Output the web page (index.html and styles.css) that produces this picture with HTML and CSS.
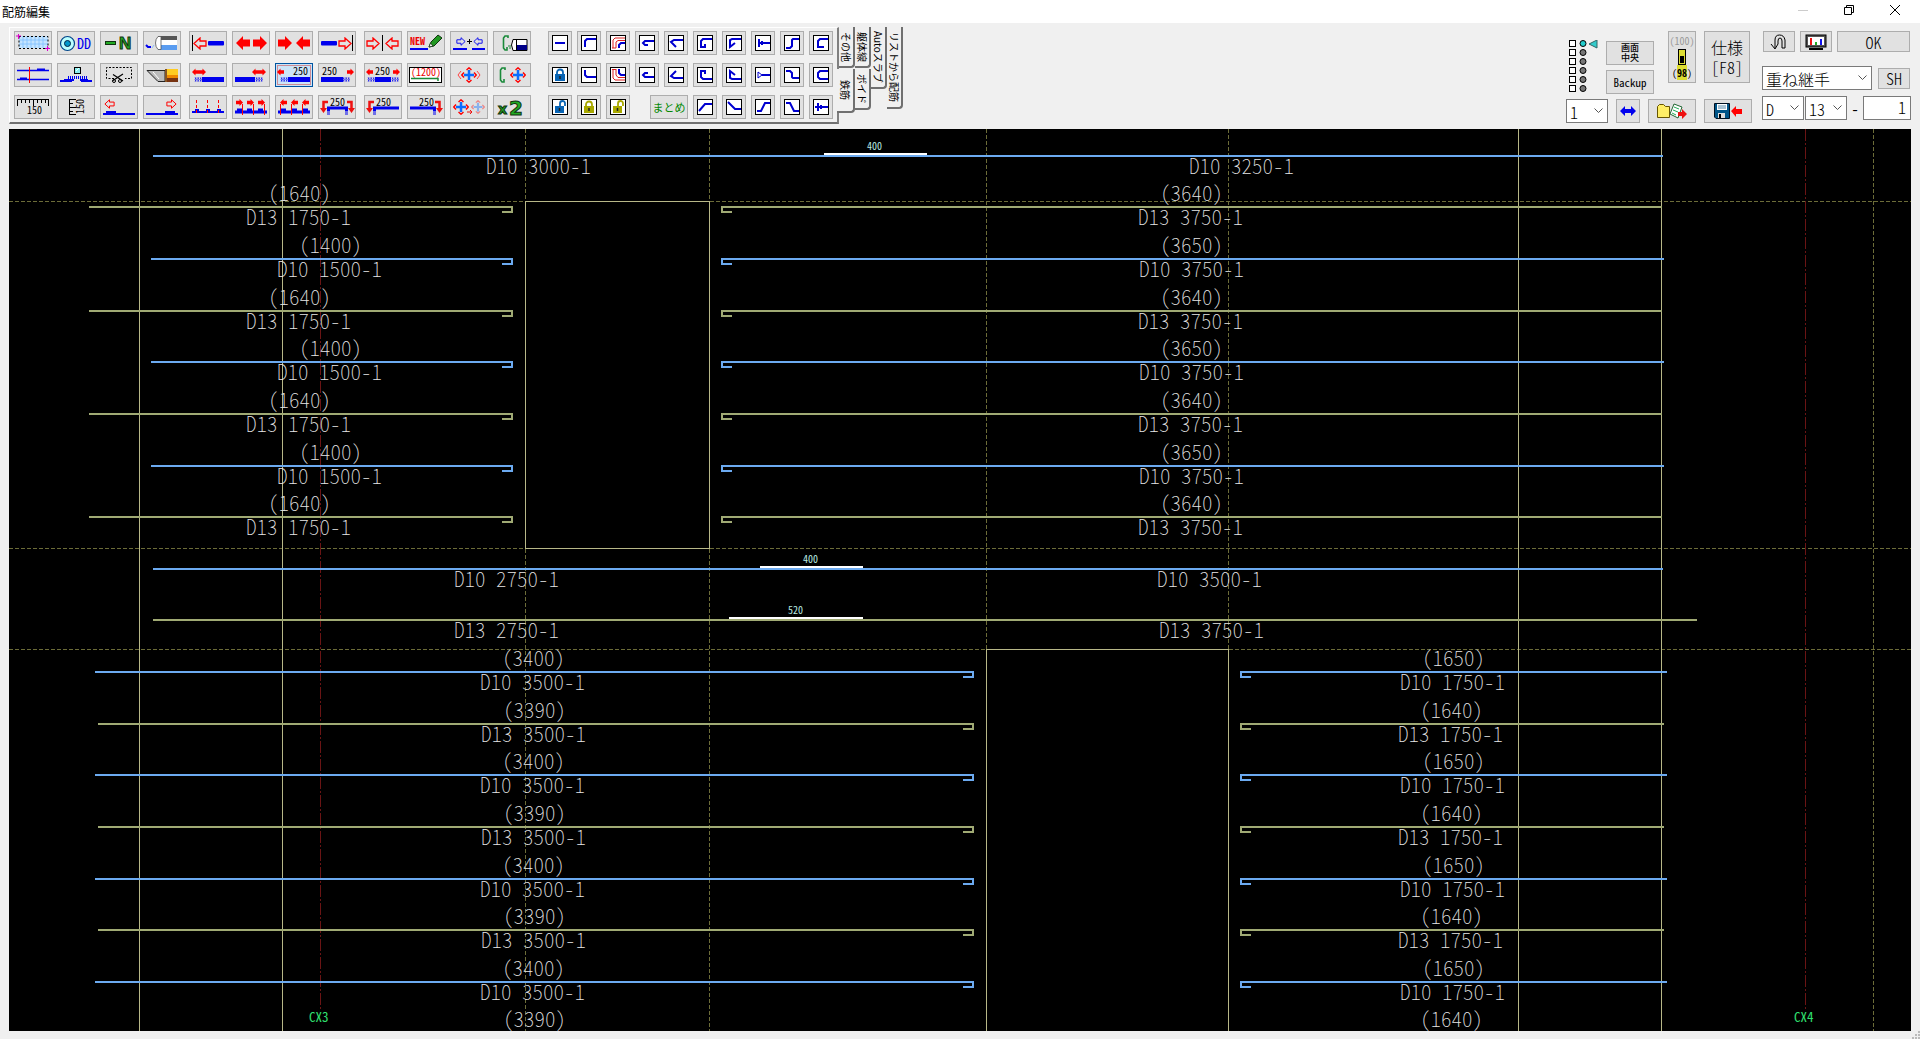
FILE: index.html
```html
<!DOCTYPE html>
<html lang="ja">
<head>
<meta charset="utf-8">
<title>配筋編集</title>
<link rel="stylesheet" href="styles.css">
</head>
<body>
<svg class="defs" aria-hidden="true">
  <symbol id="hl" viewBox="0 0 14 13"><path d="M1 6.500L7 1V4H13V9H7V12Z" fill="none" stroke="currentColor" stroke-width="1.300"/></symbol>
  <symbol id="hr" viewBox="0 0 14 13"><path d="M13 6.500L7 1V4H1V9H7V12Z" fill="none" stroke="currentColor" stroke-width="1.300"/></symbol>
  <symbol id="sl" viewBox="0 0 14 14"><path d="M0 7L7 0V3.500H14V10.500H7V14Z" fill="#f00"/></symbol>
  <symbol id="sr" viewBox="0 0 14 14"><path d="M14 7L7 0V3.500H0V10.500H7V14Z" fill="#f00"/></symbol>
  <symbol id="coil" viewBox="0 0 10 6"><path d="M2 .5Q0 3 2 5.500M5 .5Q3 3 5 5.500M8 .5Q6 3 8 5.500M1 .5Q4 3 1 5.500M4 .5Q7 3 4 5.500M7 .5Q10 3 7 5.500" fill="none" stroke="#00e" stroke-width=".8"/></symbol>
  <symbol id="cross" viewBox="0 0 16 16"><path d="M8 3V13M3 8H13" stroke="#0a6cff" stroke-width="2.500"/><path d="M5.500 3L8 .8 10.500 3M5.500 13L8 15.200 10.500 13M3 5.500L.8 8 3 10.500M13 5.500L15.200 8 13 10.500" fill="none" stroke="#f00" stroke-width="1.400"/></symbol>
  <symbol id="gc" viewBox="0 0 7 16"><path d="M6 3V1H3L1.500 3V13L3 15H5V12" fill="none" stroke="#1a8a3a" stroke-width="1.600"/></symbol>
  <symbol id="lock" viewBox="0 0 16 16"><path d="M5 8V5.500a3 3 0 0 1 6 0V8" fill="none" stroke="currentColor" stroke-width="1.800"/><rect x="3" y="7" width="10" height="7" fill="currentColor"/><path d="M8 9v3" stroke="#222" stroke-width="1.500"/></symbol>
  <symbol id="unlock" viewBox="0 0 16 16"><path d="M8 8V4.500a2.500 2.500 0 0 1 5 0V7" fill="none" stroke="currentColor" stroke-width="1.800"/><rect x="3" y="7" width="9" height="7" fill="currentColor"/><path d="M7.500 9v3" stroke="#222" stroke-width="1.500"/></symbol>
</svg>

<header class="titlebar">
  <h1 class="title">配筋編集</h1>
  <div class="window-buttons">
    <button class="win" aria-label="最小化"><svg width="12" height="12"><path d="M1 6.500H11" stroke="#ccc"/></svg></button>
    <button class="win" aria-label="元に戻す"><svg width="12" height="12"><path d="M1.500 3.500H8.500V10.500H1.500ZM3.500 3.500V1.500H10.500V8.500H8.500" fill="none" stroke="#000"/></svg></button>
    <button class="win" aria-label="閉じる"><svg width="12" height="12"><path d="M1 1L11 11M11 1L1 11" stroke="#000"/></svg></button>
  </div>
</header>

<div class="toolbar">
  <section class="panel" aria-label="鉄筋">
    <div class="tools">
      <div class="group">
        <button class="tool" aria-label="範囲選択"><svg viewBox="1 1 36 22"><rect x="5" y="5" width="29" height="12" fill="#c4e4ff"/><path d="M9 5V17M13 5V17M17 5V17M21 5V17M25 5V17M29 5V17M5 9H34M5 13H34" stroke="#7fbfff" stroke-width=".8"/><rect x="5" y="5.500" width="29" height="12" fill="none" stroke="#000" stroke-dasharray="2 2"/><path d="M2 5H7M4.500 3V8M31 17.500H36M33.500 15V20" stroke="#d0c"/></svg></button>
        <button class="tool" aria-label="DD"><svg viewBox="1 1 36 22"><circle cx="10.500" cy="12.500" r="7" fill="#bff" stroke="#048" stroke-width="1.200"/><circle cx="10.500" cy="12.500" r="3" fill="#09c" stroke="#024"/><text x="20" y="18" class="ic blue t14">DD</text></svg></button>
        <button class="tool" aria-label="N"><svg viewBox="1 1 36 22"><rect x="5.500" y="10.500" width="10" height="3" fill="#2a2" stroke="#131"/><text x="19" y="18" class="ic bold green t17">N</text></svg></button>
        <button class="tool" aria-label="消去"><svg viewBox="1 1 36 22"><path d="M3 14L5 16 8 16" fill="none" stroke="#00e" stroke-width="2"/><path d="M9 17l2-3" stroke="#8bf"/><rect x="15" y="5" width="19" height="5" fill="#555"/><rect x="15" y="9" width="19" height="5" fill="#fff"/><rect x="15" y="14" width="19" height="5" fill="#5a9cf0"/><path d="M18 5.500H15Q12.500 8 12.500 12T15 18.500H18Z" fill="#fff" stroke="#555" stroke-width=".8"/></svg></button>
      </div>
      <div class="group">
        <button class="tool" aria-label="左端へ"><svg viewBox="1 1 36 22" class="red"><path d="M3.500 4V20" stroke="#000"/><use href="#hl" x="4" y="6" width="14" height="13"/><rect x="19" y="10" width="16" height="4.500" rx="1" fill="#00e"/></svg></button>
        <button class="tool" aria-label="両側へ伸ばす"><svg viewBox="1 1 36 22"><use href="#sl" x="4" y="5" width="14" height="14"/><use href="#sr" x="21" y="5" width="14" height="14"/></svg></button>
        <button class="tool" aria-label="両側から縮める"><svg viewBox="1 1 36 22"><use href="#sr" x="3" y="5" width="14" height="14"/><use href="#sl" x="21" y="5" width="14" height="14"/></svg></button>
        <button class="tool" aria-label="右端へ"><svg viewBox="1 1 36 22" class="red"><rect x="3" y="10" width="16" height="4.500" rx="1" fill="#00e"/><use href="#hr" x="20" y="6" width="14" height="13"/><path d="M34.500 4V20" stroke="#000"/></svg></button>
      </div>
      <div class="group">
        <button class="tool" aria-label="中央へ"><svg viewBox="1 1 36 22" class="red"><use href="#hr" x="2" y="6" width="14" height="13"/><path d="M18.500 4V20" stroke="#000"/><use href="#hl" x="21" y="6" width="14" height="13"/></svg></button>
        <button class="tool" aria-label="新規"><svg viewBox="1 1 36 22"><text x="3" y="14" class="ic bold redt t9">NEW</text><rect x="3" y="17" width="18" height="2" fill="#00e"/><path d="M22 16L24 11 31 4 35 7 27 15Z" fill="#292" stroke="#131"/><path d="M22 16L23.500 12 26 15Z" fill="#fff" stroke="#131" stroke-width=".8"/></svg></button>
        <button class="tool" aria-label="結合"><svg viewBox="1 1 36 22" class="blue"><use href="#hr" x="6" y="6" width="10" height="9"/><use href="#hl" x="23" y="6" width="10" height="9"/><path d="M17 10.500H22M19.500 8V13" stroke="#000"/><path d="M3 18H17M22 18H35" stroke="#00e" stroke-width="2"/></svg></button>
        <button class="tool" aria-label="フック消去"><svg viewBox="1 1 36 22"><use href="#gc" x="9" y="4" width="7" height="16"/><path d="M15 15H18M16 17H18" stroke="#1a8a3a"/><path d="M20 8.500H34V19.500H20Q17 14 20 8.500Z" fill="#fff" stroke="#000"/><rect x="24" y="14" width="10" height="5" fill="#008"/><path d="M23.500 9V19" fill="none" stroke="#000"/></svg></button>
      </div>
      <div class="group">
        <button class="tool" aria-label="切断線"><svg viewBox="1 1 36 22"><path d="M3 7.500H35M3 16.500H35" stroke="#00e" stroke-width="1.500"/><path d="M23 6.500H31M6 15.500H13" stroke="#00e" stroke-width="2"/><path d="M15.500 4V20" stroke="#f00"/></svg></button>
        <button class="tool" aria-label="部分切断"><svg viewBox="1 1 36 22"><rect x="17.500" y="4.500" width="6" height="6" fill="#8ee" stroke="#000"/><path d="M19 8L22 5" stroke="#fff"/><path d="M11 14.500H30" stroke="#00e" stroke-width="3" stroke-dasharray="1 1"/><path d="M3 18H15M24 18H35M7 17H17M23 17H31" stroke="#00e" stroke-width="2"/></svg></button>
        <button class="tool" aria-label="切り取り"><svg viewBox="1 1 36 22"><path d="M14 15.500H6.500V4.500H31.500V15.500H25" fill="none" stroke="#000" stroke-dasharray="2 1.500"/><path d="M13 11.500L23 18M13 17.500L23 11" stroke="#000" stroke-width="1.200"/><circle cx="14" cy="18" r="1.500" fill="none" stroke="#000"/><circle cx="20" cy="18" r="1.500" fill="none" stroke="#000"/></svg></button>
        <button class="tool" aria-label="カッター"><svg viewBox="1 1 36 22"><path d="M4 7.500H22V18.500H15Z" fill="#bbb" stroke="#222"/><path d="M10 9L16 16" stroke="#fff"/><rect x="22" y="6" width="13" height="6" fill="#fc2"/><rect x="22" y="12" width="13" height="3" fill="#e80"/><rect x="22" y="15" width="13" height="4" fill="#731"/><rect x="22" y="6" width="2" height="13" fill="#852"/></svg></button>
      </div>
      <div class="group">
        <button class="tool" aria-label="左端調整"><svg viewBox="1 1 36 22"><use href="#sl" x="3" y="5" width="7" height="8"/><use href="#sr" x="10" y="5" width="7" height="8"/><use href="#coil" x="5" y="14" width="9" height="5"/><rect x="13" y="14" width="22" height="5" fill="#00e"/></svg></button>
        <button class="tool" aria-label="右端調整"><svg viewBox="1 1 36 22"><use href="#sl" x="20" y="5" width="7" height="8"/><use href="#sr" x="27" y="5" width="7" height="8"/><use href="#coil" x="23" y="14" width="9" height="5"/><rect x="3" y="14" width="20" height="5" fill="#00e"/></svg></button>
        <button class="tool pressed" aria-label="左へ250"><svg viewBox="1 1 36 22"><rect x="2.500" y="2.500" width="33" height="19" fill="none" stroke="#c33" stroke-dasharray="1 1"/><use href="#sl" x="2" y="5" width="7" height="8"/><text x="18" y="12" class="ic t9">250</text><use href="#coil" x="5" y="14" width="9" height="5"/><rect x="13" y="14" width="22" height="5" fill="#00e"/></svg></button>
        <button class="tool" aria-label="右へ250"><svg viewBox="1 1 36 22"><use href="#sr" x="29" y="5" width="7" height="8"/><text x="4" y="12" class="ic t9">250</text><rect x="3" y="14" width="22" height="5" fill="#00e"/><use href="#coil" x="24" y="14" width="9" height="5"/></svg></button>
      </div>
      <div class="group">
        <button class="tool" aria-label="両側250"><svg viewBox="1 1 36 22"><use href="#sl" x="2" y="5" width="7" height="8"/><text x="11" y="12" class="ic t9">250</text><use href="#sr" x="29" y="5" width="7" height="8"/><use href="#coil" x="3" y="14" width="9" height="5"/><rect x="11" y="14" width="16" height="5" fill="#00e"/><use href="#coil" x="27" y="14" width="9" height="5"/></svg></button>
        <button class="tool" aria-label="寸法1200"><svg viewBox="1 1 36 22"><rect x="2.500" y="4.500" width="32" height="15" fill="#fff" stroke="#000"/><text x="4" y="13" class="ic redt t9">(1200)</text><path d="M4 15.500H31V18" fill="none" stroke="#1a8a3a" stroke-width="1.500"/></svg></button>
        <button class="tool" aria-label="移動"><svg viewBox="1 1 36 22"><use href="#cross" x="11" y="4" width="16" height="16"/><path d="M11 8L8 12 11 16M27 8L30 12 27 16" fill="none" stroke="#f44"/></svg></button>
        <button class="tool" aria-label="フック移動"><svg viewBox="1 1 36 22"><use href="#gc" x="6" y="4" width="7" height="16"/><use href="#cross" x="17" y="4" width="16" height="16"/></svg></button>
      </div>
      <div class="group">
        <button class="tool" aria-label="横間隔150"><svg viewBox="1 1 36 22"><path d="M3 4.500H35M3.500 4V11M7.500 4V8M11.500 4V8M15.500 4V8M19.500 4V11M23.500 4V8M27.500 4V8M31.500 4V8M34.500 4V11" stroke="#000" fill="none"/><text x="13" y="19" class="ic t9">150</text></svg></button>
        <button class="tool" aria-label="縦間隔150"><svg viewBox="1 1 36 22"><path d="M12.500 4V20M12 4.500H19M12 8.500H16M12 12.500H19M12 16.500H16M12 19.500H19" stroke="#000" fill="none"/><text transform="translate(27 19) rotate(-90)" class="ic t9">150</text></svg></button>
        <button class="tool" aria-label="左へ重ね"><svg viewBox="1 1 36 22" class="red"><use href="#hl" x="4" y="4" width="11" height="10"/><path d="M3 19H35M6 17H16" stroke="#00e" stroke-width="2"/></svg></button>
        <button class="tool" aria-label="右へ重ね"><svg viewBox="1 1 36 22" class="red"><use href="#hr" x="23" y="4" width="11" height="10"/><path d="M3 19H35M22 17H32" stroke="#00e" stroke-width="2"/></svg></button>
      </div>
      <div class="group">
        <button class="tool" aria-label="継手位置"><svg viewBox="1 1 36 22"><path d="M3 17H35M6 15H10M17 15H21M28 15H32" stroke="#00e" stroke-width="2"/><path d="M7.500 5V20M18.500 5V20M29.500 5V20" stroke="#f00" stroke-dasharray="3 2"/></svg></button>
        <button class="tool" aria-label="継手右へ"><svg viewBox="1 1 36 22"><path d="M3 17H35M5 15H10M15 15H20M26 15H31" stroke="#00e" stroke-width="3"/><use href="#sr" x="4" y="4" width="7" height="7"/><use href="#sr" x="15" y="4" width="7" height="7"/><use href="#sr" x="26" y="4" width="7" height="7"/><path d="M10.500 9V20M21.500 9V20M32.500 9V20" stroke="#f00"/></svg></button>
        <button class="tool" aria-label="継手左へ"><svg viewBox="1 1 36 22"><path d="M3 17H35M6 15H11M17 15H22M28 15H33" stroke="#00e" stroke-width="3"/><use href="#sl" x="5" y="4" width="7" height="7"/><use href="#sl" x="16" y="4" width="7" height="7"/><use href="#sl" x="27" y="4" width="7" height="7"/><path d="M5.500 9V20M16.500 9V20M27.500 9V20" stroke="#f00"/></svg></button>
        <button class="tool" aria-label="両端フック250"><svg viewBox="1 1 36 22"><path d="M10.500 20V13H28.500V20" fill="none" stroke="#00e" stroke-width="3"/><path d="M8 17H13M8 19H13M26 17H31M26 19H31" stroke="#e0e0e0"/><text x="12" y="11" class="ic t9">250</text><path d="M10 7H5.500V14M29 7H33.500V14" fill="none" stroke="#e11" stroke-width="2.500"/><path d="M2 13H9L5.500 18ZM30 13H37L33.500 18Z" fill="#e11"/></svg></button>
      </div>
      <div class="group">
        <button class="tool" aria-label="左フック250"><svg viewBox="1 1 36 22"><path d="M10.500 20V13H35" fill="none" stroke="#00e" stroke-width="3"/><path d="M8 17H13M8 19H13" stroke="#e0e0e0"/><text x="12" y="11" class="ic t9">250</text><path d="M10 7H5.500V14" fill="none" stroke="#e11" stroke-width="2.500"/><path d="M2 13H9L5.500 18Z" fill="#e11"/></svg></button>
        <button class="tool" aria-label="右フック250"><svg viewBox="1 1 36 22"><path d="M27.500 20V13H3" fill="none" stroke="#00e" stroke-width="3"/><path d="M25 17H30M25 19H30" stroke="#e0e0e0"/><text x="12" y="11" class="ic t9">250</text><path d="M28 7H32.500V14" fill="none" stroke="#e11" stroke-width="2.500"/><path d="M29 13H36L32.500 18Z" fill="#e11"/></svg></button>
        <button class="tool" aria-label="複写移動"><svg viewBox="1 1 36 22"><use href="#cross" x="3" y="4" width="16" height="16"/><use href="#cross" x="21" y="5" width="14" height="14" opacity=".4"/><path d="M17 17H22M20 15L22 17 20 19" fill="none" stroke="#e11"/></svg></button>
        <button class="tool" aria-label="2倍"><svg viewBox="1 1 36 22"><text x="5" y="19" class="ic bold green heavy t14">x</text><text x="16" y="20" class="ic bold green heavy t20">2</text></svg></button>
      </div>
    </div>

    <div class="shapes">
      <button class="shape" aria-label="直線"><svg viewBox="0 0 16 16"><path d="M3 8H13"/></svg></button>
      <button class="shape" aria-label="上曲げ"><svg viewBox="0 0 16 16"><path d="M4 12V6L6 4H15"/></svg></button>
      <button class="shape" aria-label="上二重曲げ"><svg viewBox="0 0 16 16"><path d="M3 13V5L5 3H15M6 13V7L8 5.500H15M2 13H6" class="thin"/><path d="M9 13V10L11 8H15"/></svg></button>
      <button class="shape" aria-label="180度フック下"><svg viewBox="0 0 16 16"><path d="M15 6H6L4 8L6 10H9"/></svg></button>
      <button class="shape" aria-label="135度フック下"><svg viewBox="0 0 16 16"><path d="M15 5H6L3 7L8 12"/></svg></button>
      <button class="shape" aria-label="折返し下"><svg viewBox="0 0 16 16"><path d="M15 4H6L4 6V12H8V9"/></svg></button>
      <button class="shape" aria-label="折返し斜め下"><svg viewBox="0 0 16 16"><path d="M15 4H6L4 5V12L9 8"/></svg></button>
      <button class="shape" aria-label="定着板"><svg viewBox="0 0 16 16"><path d="M4 4V12M4 8H15M7 6V10"/></svg></button>
      <button class="shape" aria-label="段差上"><svg viewBox="0 0 16 16"><path d="M2 13H6L8 11V5L9 4H15"/></svg></button>
      <button class="shape" aria-label="コの字上"><svg viewBox="0 0 16 16"><path d="M15 4H7L5 6V12H11"/></svg></button>

      <button class="shape c-blue" aria-label="ロック"><svg viewBox="0 0 16 16"><use href="#lock"/></svg></button>
      <button class="shape" aria-label="下曲げ"><svg viewBox="0 0 16 16"><path d="M4 3V8L6 10H15"/></svg></button>
      <button class="shape" aria-label="下二重曲げ"><svg viewBox="0 0 16 16"><path d="M3 2V11L5 13H15M6 2V8L8 10.500H15M2 2.500H6" class="thin"/><path d="M9 2V6L11 8H15"/></svg></button>
      <button class="shape" aria-label="180度フック上"><svg viewBox="0 0 16 16"><path d="M15 10H6L4 8L6 6H9"/></svg></button>
      <button class="shape" aria-label="135度フック上"><svg viewBox="0 0 16 16"><path d="M15 11H6L3 9L8 4"/></svg></button>
      <button class="shape" aria-label="折返し上"><svg viewBox="0 0 16 16"><path d="M15 12H6L4 10V4H8V7"/></svg></button>
      <button class="shape" aria-label="折返し斜め上"><svg viewBox="0 0 16 16"><path d="M15 12H6L4 11V4L9 8"/></svg></button>
      <button class="shape" aria-label="丸端"><svg viewBox="0 0 16 16"><path d="M7 8H15"/><path d="M3 5V11L7 8Z" class="fine"/></svg></button>
      <button class="shape" aria-label="段差下"><svg viewBox="0 0 16 16"><path d="M2 4H6L8 6V10L9 11H15"/></svg></button>
      <button class="shape" aria-label="コの字下"><svg viewBox="0 0 16 16"><path d="M15 4H7L5 6V10L7 12H15"/></svg></button>

      <button class="shape c-blue" aria-label="ロック解除"><svg viewBox="0 0 16 16"><use href="#unlock"/></svg></button>
      <button class="shape c-olive" aria-label="全ロック"><svg viewBox="0 0 16 16"><use href="#lock"/></svg></button>
      <button class="shape c-olive" aria-label="全ロック解除"><svg viewBox="0 0 16 16"><use href="#unlock"/></svg></button>
      <button class="summary">まとめ</button>
      <button class="shape" aria-label="斜め上"><svg viewBox="0 0 16 16"><path d="M2 12L8 5H15"/></svg></button>
      <button class="shape" aria-label="斜め下"><svg viewBox="0 0 16 16"><path d="M2 3L9 10H15"/></svg></button>
      <button class="shape" aria-label="折上げ"><svg viewBox="0 0 16 16"><path d="M2 12H6L10 4H15"/></svg></button>
      <button class="shape" aria-label="折下げ"><svg viewBox="0 0 16 16"><path d="M2 4H6L10 12H15"/></svg></button>
      <button class="shape" aria-label="十字"><svg viewBox="0 0 16 16"><path d="M2 8H15M5 4V12M8 6V10"/></svg></button>
    </div>
  </section>

  <nav class="tabs" aria-label="種別">
    <div class="tab-col">
      <button class="tab">その他</button>
      <button class="tab current">鉄筋</button>
    </div>
    <div class="tab-col">
      <button class="tab">躯体線</button>
      <button class="tab">ボイド</button>
    </div>
    <div class="tab-col"><button class="tab long">Autoスラブ</button></div>
    <div class="tab-col"><button class="tab longest">リストから配筋</button></div>
  </nav>

  <div class="right">
    <div class="view">
      <div class="view-top">
        <svg class="leds" width="29" height="52" viewBox="0 0 29 52" id="leds" aria-hidden="true"></svg>
        <div class="stack">
          <button class="btn small two">画面<br>中央</button>
          <button class="btn small">Backup</button>
        </div>
        <button class="btn zoom"><span class="off">(100)</span><svg width="8" height="16"><rect x=".5" y=".5" width="7" height="15" fill="#dd3" stroke="#000"/><rect x="2" y="7" width="4" height="7"/></svg><span class="on">(<b>98</b>)</span></button>
        <button class="btn spec">仕様<br>[F8]</button>
      </div>
      <div class="view-bottom">
        <select class="field page" aria-label="ページ"><option>1</option></select>
        <button class="btn sq" aria-label="左右反転"><svg width="18" height="12"><path d="M1 6L6 1V4H12V1L17 6L12 11V8H6V11Z" fill="#00e"/></svg></button>
        <button class="btn wide" aria-label="開く"><svg width="32" height="18"><path d="M1.500 4.500L3.500 2.500H7.500L9.500 4.500H13.500V15.500H1.500Z" fill="#fe6" stroke="#650"/><path d="M18 2L26 5 22 16 14 12Z" fill="#fff" stroke="#263"/><path d="M18 5L23 7M17 8L22 10M16 11L20 13" stroke="#2a5"/><path d="M22 10H26V7L31 12 26 17V14H22Z" fill="#e11"/></svg></button>
        <button class="btn wide" aria-label="保存"><svg width="30" height="18"><path d="M1.500 1.500H16.500V16.500H3L1.500 15Z" fill="#058" stroke="#012"/><rect x="4" y="2" width="10" height="6" fill="#fff"/><path d="M5 4H13M5 6H13" stroke="#58a"/><rect x="5" y="11" width="7" height="5" fill="#ddd"/><rect x="6" y="12" width="2" height="4"/><path d="M18 9L23 4V7H29V12H23V15Z" fill="#f00"/></svg></button>
      </div>
    </div>
    <div class="spec-area">
      <div class="line first">
        <button class="btn low" aria-label="元に戻す"><svg width="18" height="16"><path d="M5 14V6Q5 1 9.500 1T15 6V14H12V7Q12 4 10 4T8 7V10" fill="none" stroke="#000"/><path d="M1 10L5 15 8 10" fill="none" stroke="#000"/></svg></button>
        <button class="btn low" aria-label="画面"><svg width="22" height="16"><rect x="1" y="1" width="20" height="12" fill="#555" stroke="#000"/><rect x="3" y="3" width="16" height="8" fill="#fff"/><path d="M6 4V11" stroke="#e11" stroke-width="2"/><path d="M11 8V11" stroke="#2a2" stroke-width="2"/><path d="M16 5V11" stroke="#11e" stroke-width="2"/><path d="M4 15H18" stroke="#000" stroke-width="2"/></svg></button>
        <button class="btn low ok">OK</button>
      </div>
      <div class="line second">
        <select class="field joint" aria-label="継手"><option>重ね継手</option></select>
        <button class="btn low">SH</button>
      </div>
      <div class="line">
        <select class="field kind" aria-label="種類"><option>D</option></select>
        <select class="field kind" aria-label="径"><option>13</option></select>
        <span class="hyphen">-</span>
        <input class="field count" aria-label="本数" value="1">
      </div>
    </div>
  </div>
</div>

<main class="canvas">
  <svg id="drawing" viewBox="9 129 1902 902" role="img" aria-label="配筋図"></svg>
</main>
<footer class="status"><svg width="9" height="8" aria-hidden="true"><path d="M7 1h2M4 4h2M7 4h2M1 7h2M4 7h2M7 7h2" stroke="#bbb" stroke-width="2"/></svg></footer>
<script src="drawing.js"></script>
</body>
</html>
```
FILE: styles.css
```css
* { box-sizing: border-box; }
body {
  margin: 0;
  background: #f0f0f0;
  color: #000;
  font-family: "Noto Sans CJK JP", sans-serif;
  font-size: 12px;
}
button, select, input { font: inherit; color: inherit; margin: 0; padding: 0; border-radius: 0; }
.defs { position: absolute; width: 0; height: 0; }

.titlebar { display: flex; justify-content: space-between; height: 23px; padding-right: 2px; background: #fff; }
.title { margin: 0; padding-left: 2px; font-size: 12px; font-weight: 400; line-height: 23px; }
.window-buttons { display: flex; }
.win { width: 46px; height: 20px; border: 0; background: none; display: flex; align-items: center; justify-content: center; }

.toolbar { display: flex; align-items: flex-start; height: 106px; padding: 4px 9px 0; }
.panel {
  display: flex;
  gap: 17px;
  height: 97px;
  padding: 3px 4px;
  border: 1px solid #fff;
  border-right: 2px solid #808080;
  border-bottom: 2px solid #707070;
}
.tools { display: grid; grid-template-columns: repeat(3, auto); gap: 8px; }
.group { display: flex; gap: 5px; }
.tool, .shape, .summary { height: 24px; border: 1px solid #adadad; background: #e1e1e1; }
.tool { width: 38px; }
.tool svg { display: block; width: 36px; height: 22px; overflow: visible; }
.pressed { border: 1px solid #0054a0; background: #cce4f7; }
.shapes { display: grid; grid-template-columns: repeat(10, 24px); gap: 8px 5px; }
.shape { width: 24px; display: flex; align-items: center; justify-content: center; }
.shape svg { width: 16px; height: 16px; background: #fff; outline: 1px solid #000; outline-offset: -1px; }
.shape path { fill: none; stroke: #0000d0; stroke-width: 2; }
.shape .thin { stroke: #e02020; stroke-width: 1; }
.shape .fine { stroke-width: 1; }
.c-blue { color: #0864b4; }
.c-olive { color: #a8a800; }
.summary { grid-column: 4 / span 2; width: 38px; justify-self: end; color: #080; font-size: 11px; }
.red { color: #f00; }
.blue { color: #00e; }
.ic { font-family: "Noto Sans CJK JP", sans-serif; font-feature-settings: "hwid"; fill: #000; }
.ic.blue { fill: #00e; }
.ic.redt { fill: #e00; }
.ic.green { fill: #2a2; stroke: #131; stroke-width: 1; font-family: "Liberation Sans", sans-serif; }
.ic.heavy { font-family: "DejaVu Sans", sans-serif; }
.bold { font-weight: 700; }
.t9 { font-size: 10px; }
.t14 { font-size: 14px; }
.t17 { font-size: 17px; }
.t20 { font-size: 20px; }

.tabs { display: flex; }
.tab-col { display: flex; flex-direction: column; gap: 1px; }
.tab {
  width: 16px;
  height: 41px;
  padding: 3px 0;
  border: 0;
  border-right: 2px solid #707070;
  border-bottom: 2px solid #707070;
  border-radius: 0 0 4px 0;
  background: #f0f0f0;
  writing-mode: vertical-rl;
  text-orientation: sideways;
  font-size: 10px;
  line-height: 14px;
  text-align: center;
  white-space: nowrap;
}
.tab.current { height: 44px; width: 18px; margin-left: -2px; }
.tab.long { height: 62px; }
.tab.longest { height: 82px; }

.right { display: flex; gap: 10px; margin-left: auto; padding-top: 4px; }
.btn { border: 1px solid #adadad; background: #e1e1e1; display: flex; align-items: center; justify-content: center; font-feature-settings: "hwid"; }
.view-top { display: flex; align-items: flex-start; justify-content: flex-end; height: 68px; }
.leds { margin: 9px 8px 0 0; }
.stack { display: flex; flex-direction: column; gap: 5px; padding-top: 10px; margin-right: 14px; }
.small { width: 48px; height: 24px; font-size: 11px; }
.small.two { font-size: 9px; font-weight: 500; line-height: 10px; }
.zoom { width: 28px; height: 52px; flex-direction: column; font-size: 10px; line-height: 16px; margin-right: 8px; }
.off { color: #999; }
.on b { background: #dd3; }
.spec { width: 46px; height: 52px; margin-right: 2px; font-size: 16px; line-height: 20px; font-weight: 300; }
.view-bottom { display: flex; gap: 8px; align-items: flex-start; }
.sq { width: 24px; height: 24px; }
.wide { width: 48px; height: 24px; }
.field {
  height: 24px;
  padding-bottom: 2px;
  border: 1px solid #7a7a7a;
  background: #fff;
  font-size: 16px;
  font-weight: 300;
  font-feature-settings: "hwid";
}
select.field {
  appearance: none;
  padding: 0 3px 2px;
  background: #fff url("data:image/svg+xml,%3Csvg xmlns='http://www.w3.org/2000/svg' width='9' height='6'%3E%3Cpath d='M.5 .5L4.500 4.500L8.500 .5' fill='none' stroke='%23555'/%3E%3C/svg%3E") no-repeat right 4px center;
}
.page { width: 42px; }
.spec-area { width: 149px; }
.line { display: flex; align-items: center; gap: 1px; }
.line.first { gap: 5px; margin-bottom: 14px; padding: 0 1px; }
.line.second { gap: 6px; margin-bottom: 6px; padding-right: 1px; }
.low { width: 32px; height: 21px; font-size: 16px; font-weight: 300; }
.ok { flex: 1; }
.joint { flex: 1; }
.kind { width: 42px; }
.hyphen { width: 14px; text-align: center; font-size: 16px; line-height: 24px; }
.count { width: 48px; padding-right: 4px; text-align: right; }

.canvas { margin: 0 9px; background: #000; }
.canvas svg { display: block; width: 100%; height: auto; }
.wall { stroke: #b8b888; stroke-width: 1; shape-rendering: crispEdges; fill: none; }
.guide { stroke: #6c6c38; stroke-width: 1; stroke-dasharray: 4 2; shape-rendering: crispEdges; }
.axis { stroke: #6a1414; stroke-width: 1; stroke-dasharray: 12 2 2 2; shape-rendering: crispEdges; }
.bar { fill: none; stroke-width: 2; shape-rendering: crispEdges; }
.d10 { stroke: #6caaf0; }
.d13 { stroke: #a0aa74; }
.lap { stroke: #fff; }
.canvas text { font-feature-settings: "hwid"; font-weight: 100; white-space: pre; }
.label { font-size: 21px; fill: #e8e8e8; }
.canvas .lap-label { font-size: 10px; font-weight: 400; fill: #b8e8e0; }
.canvas .axis-label { font-size: 13px; font-weight: 400; fill: #30e070; }
.status { height: 8px; display: flex; justify-content: flex-end; }
```
FILE: drawing.js
```js
const NS = "http://www.w3.org/2000/svg";
const drawing = document.getElementById("drawing");

function add(parent, name, attrs, text) {
  const el = document.createElementNS(NS, name);
  for (const key in attrs) el.setAttribute(key, attrs[key]);
  if (text) el.textContent = text;
  parent.appendChild(el);
}
const path = (cls, d) => add(drawing, "path", { class: cls, d });
const text = (cls, x, y, value) => add(drawing, "text", { class: cls, x, y }, value);

// grid lines and openings
path("guide", "M9 201.500H525M710 201.500H1911M9 548.500H525M710 548.500H1911M9 649.500H986M1229 649.500H1911");
path("guide", "M525.500 129V201M525.500 549V1031M709.500 129V201M709.500 549V1031M986.500 129V649M1228.500 129V649M1873.500 129V1031");
path("wall", "M139.500 129V1031M282.500 129V1031M1518.500 129V1031M1661.500 129V1031");
path("wall", "M525.500 201.500H709.500V548.500H525.500ZM986.500 1031V649.500H1228.500V1031");
path("axis", "M320.500 129V1010M1805.500 129V1010");

// a bar with a hook at its right or left end
function hookRight(cls, x1, x2, y) { path("bar " + cls, `M${x1} ${y}H${x2 - 1}V${y + 5}H${x2 - 11}`); }
function hookLeft(cls, x1, x2, y) { path("bar " + cls, `M${x2} ${y}H${x1 + 1}V${y + 5}H${x1 + 11}`); }
function labels(xTop, top, xName, name, y) {
  text("label", xTop, y - 6, top);
  text("label", xName, y + 18, name);
}

// continuous bars with lap joints
for (const [cls, y, end, lap1, lap2, lapX, lap, xa, a, xb, b] of [
  ["d10", 156, 1663, 824, 927, 867, "400", 486, "D10 3000-1", 1189, "D10 3250-1"],
  ["d10", 569, 1663, 760, 863, 803, "400", 454, "D10 2750-1", 1157, "D10 3500-1"],
  ["d13", 620, 1697, 729, 863, 788, "520", 454, "D13 2750-1", 1159, "D13 3750-1"]
]) {
  path("bar " + cls, `M153 ${y}H${end}`);
  path("bar lap", `M${lap1} ${y - 2}H${lap2}`);
  text("lap-label", lapX, y - 6, lap);
  text("label", xa, y + 18, a);
  text("label", xb, y + 18, b);
}

// rows beside the upper opening
[207, 259, 311, 362, 414, 466, 517].forEach((y, i) => {
  if (i % 2 === 0) {
    hookRight("d13", 89, 513, y);
    labels(268, "(1640)", 246, "D13 1750-1", y);
    hookLeft("d13", 721, 1662, y);
    labels(1160, "(3640)", 1138, "D13 3750-1", y);
  } else {
    hookRight("d10", 151, 513, y);
    labels(299, "(1400)", 277, "D10 1500-1", y);
    hookLeft("d10", 721, 1664, y);
    labels(1160, "(3650)", 1139, "D10 3750-1", y);
  }
});

// rows beside the lower opening
[672, 724, 775, 827, 879, 930, 982, 1033].forEach((y, i) => {
  if (i % 2 === 0) {
    hookRight("d10", 95, 974, y);
    labels(502, "(3400)", 480, "D10 3500-1", y);
    hookLeft("d10", 1240, 1667, y);
    labels(1422, "(1650)", 1400, "D10 1750-1", y);
  } else if (y < 1031) {
    hookRight("d13", 98, 974, y);
    labels(503, "(3390)", 481, "D13 3500-1", y);
    hookLeft("d13", 1240, 1664, y);
    labels(1420, "(1640)", 1398, "D13 1750-1", y);
  } else {
    // the last bars lie below the view, only their lengths show
    text("label", 503, y - 6, "(3390)");
    text("label", 1420, y - 6, "(1640)");
  }
});

text("axis-label", 309, 1022, "CX3");
text("axis-label", 1794, 1022, "CX4");

// layer indicator: the first layer is active
const leds = document.getElementById("leds");
for (let i = 0; i < 6; i++) {
  const y = i * 9;
  add(leds, "rect", { x: 0.5, y: y + 0.5, width: 6, height: 6, fill: "#fff", stroke: "#000" });
  add(leds, "circle", { cx: 14, cy: y + 3.5, r: 3, fill: i ? "#777" : "#2cc", stroke: "#000" });
}
add(leds, "path", { d: "M20 4L28 0V8Z", fill: "#3cc", stroke: "#366" });
```
